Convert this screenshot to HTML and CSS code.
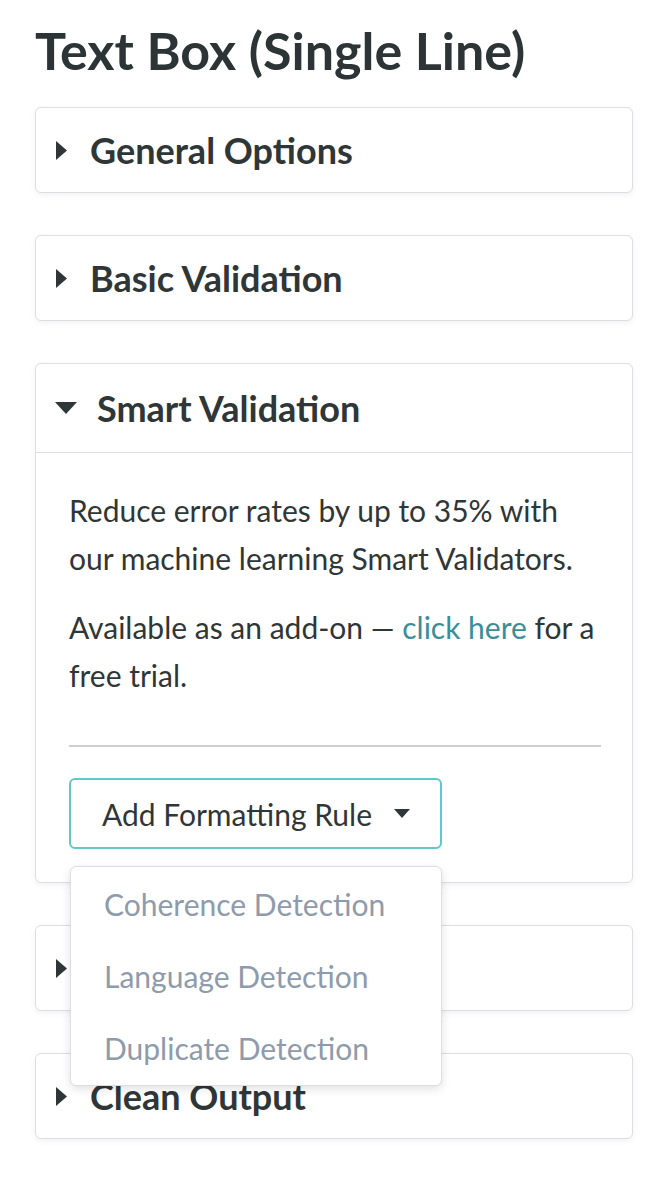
FILE: index.html
```html
<!DOCTYPE html>
<html lang="en">
<head>
    <meta charset="UTF-8">
    <title>Text Box (Single Line)</title>
    <link rel="stylesheet" href="styles.css">
</head>
<body>
    <div class="page">
        <h1>Text Box (Single Line)</h1>

        <div class="panel">
            <div class="panel-head">
                <svg class="arrow-right" width="11" height="19" viewBox="0 0 11 19"><path d="M0 0 L11 9.5 L0 19 Z"/></svg>
                <span>General Options</span>
            </div>
        </div>

        <div class="panel">
            <div class="panel-head">
                <svg class="arrow-right" width="11" height="19" viewBox="0 0 11 19"><path d="M0 0 L11 9.5 L0 19 Z"/></svg>
                <span>Basic Validation</span>
            </div>
        </div>

        <div class="panel">
            <div class="panel-head open">
                <svg class="arrow-down" width="22" height="12" viewBox="0 0 22 12"><path d="M0 0 L22 0 L11 12 Z"/></svg>
                <span>Smart Validation</span>
            </div>
            <div class="panel-body">
                <p>Reduce error rates by up to 35% with our machine learning Smart Validators.</p>
                <p>Available as an add-on — <a href="#">click here</a> for a free trial.</p>
                <hr>
                <div class="dropdown">
                    <button type="button" class="dropdown-btn">
                        Add Formatting Rule
                        <svg width="16" height="9" viewBox="0 0 16 9"><path d="M0 0 L16 0 L8 9 Z"/></svg>
                    </button>
                    <ul class="dropdown-menu">
                        <li>Coherence Detection</li>
                        <li>Language Detection</li>
                        <li>Duplicate Detection</li>
                    </ul>
                </div>
            </div>
        </div>

        <div class="panel">
            <div class="panel-head">
                <svg class="arrow-right" width="11" height="19" viewBox="0 0 11 19"><path d="M0 0 L11 9.5 L0 19 Z"/></svg>
                <span>Advanced Validation</span>
            </div>
        </div>

        <div class="panel">
            <div class="panel-head">
                <svg class="arrow-right" width="11" height="19" viewBox="0 0 11 19"><path d="M0 0 L11 9.5 L0 19 Z"/></svg>
                <span>Clean Output</span>
            </div>
        </div>
    </div>
</body>
</html>
```

FILE: styles.css
```css
* {
    box-sizing: border-box;
    margin: 0;
    padding: 0;
    font-family: Lato, "Open Sans", sans-serif;
}

body {
    background: #fff;
    color: #2f3637;
}

.page {
    padding: 20px 23px 40px 35px;
}

h1 {
    font-size: 52px;
    font-weight: 700;
    line-height: 60px;
    margin-bottom: 27px;
    color: #2c3435;
}

.panel {
    border: 1px solid #dddde3;
    border-radius: 6px;
    box-shadow: 0 2px 6px rgba(0, 0, 0, 0.06);
    margin-bottom: 42px;
    background: #fff;
}

.panel-head {
    display: flex;
    align-items: center;
    gap: 23px;
    height: 84px;
    padding: 0 20px;
    font-size: 36px;
    font-weight: 700;
}

.panel-head svg {
    fill: #2f3637;
    flex-shrink: 0;
}

.panel-head.open {
    height: 89px;
    gap: 20px;
    padding-left: 19px;
    border-bottom: 1px solid #dddde3;
}

.panel-body {
    padding: 33px 33px 33px 33px;
    font-size: 30px;
    line-height: 48px;
}

.panel-body p {
    margin-bottom: 21px;
}

.panel-body a {
    color: #3a8e98;
    text-decoration: none;
}

hr {
    border: none;
    border-top: 2px solid #cfcfd3;
    width: 532px;
    margin: 46px 0 31px 0;
}

.dropdown {
    position: relative;
    width: 373px;
}

.dropdown-btn {
    display: flex;
    align-items: center;
    justify-content: space-between;
    width: 100%;
    height: 71px;
    padding: 0 30px 0 31px;
    border: 2px solid #62c6cb;
    border-radius: 6px;
    background: #fff;
    color: #2f3637;
    font-size: 30px;
}

.dropdown-btn svg {
    fill: #2f3637;
}

.dropdown-menu {
    position: absolute;
    top: 88px;
    left: 1px;
    width: 372px;
    list-style: none;
    background: #fff;
    border: 1px solid #dddde3;
    border-radius: 6px;
    box-shadow: 0 3px 10px rgba(0, 0, 0, 0.12);
    padding: 1px 0;
}

.dropdown-menu li {
    height: 72px;
    line-height: 72px;
    padding-left: 33px;
    font-size: 30px;
    color: #8d9bac;
}
```
